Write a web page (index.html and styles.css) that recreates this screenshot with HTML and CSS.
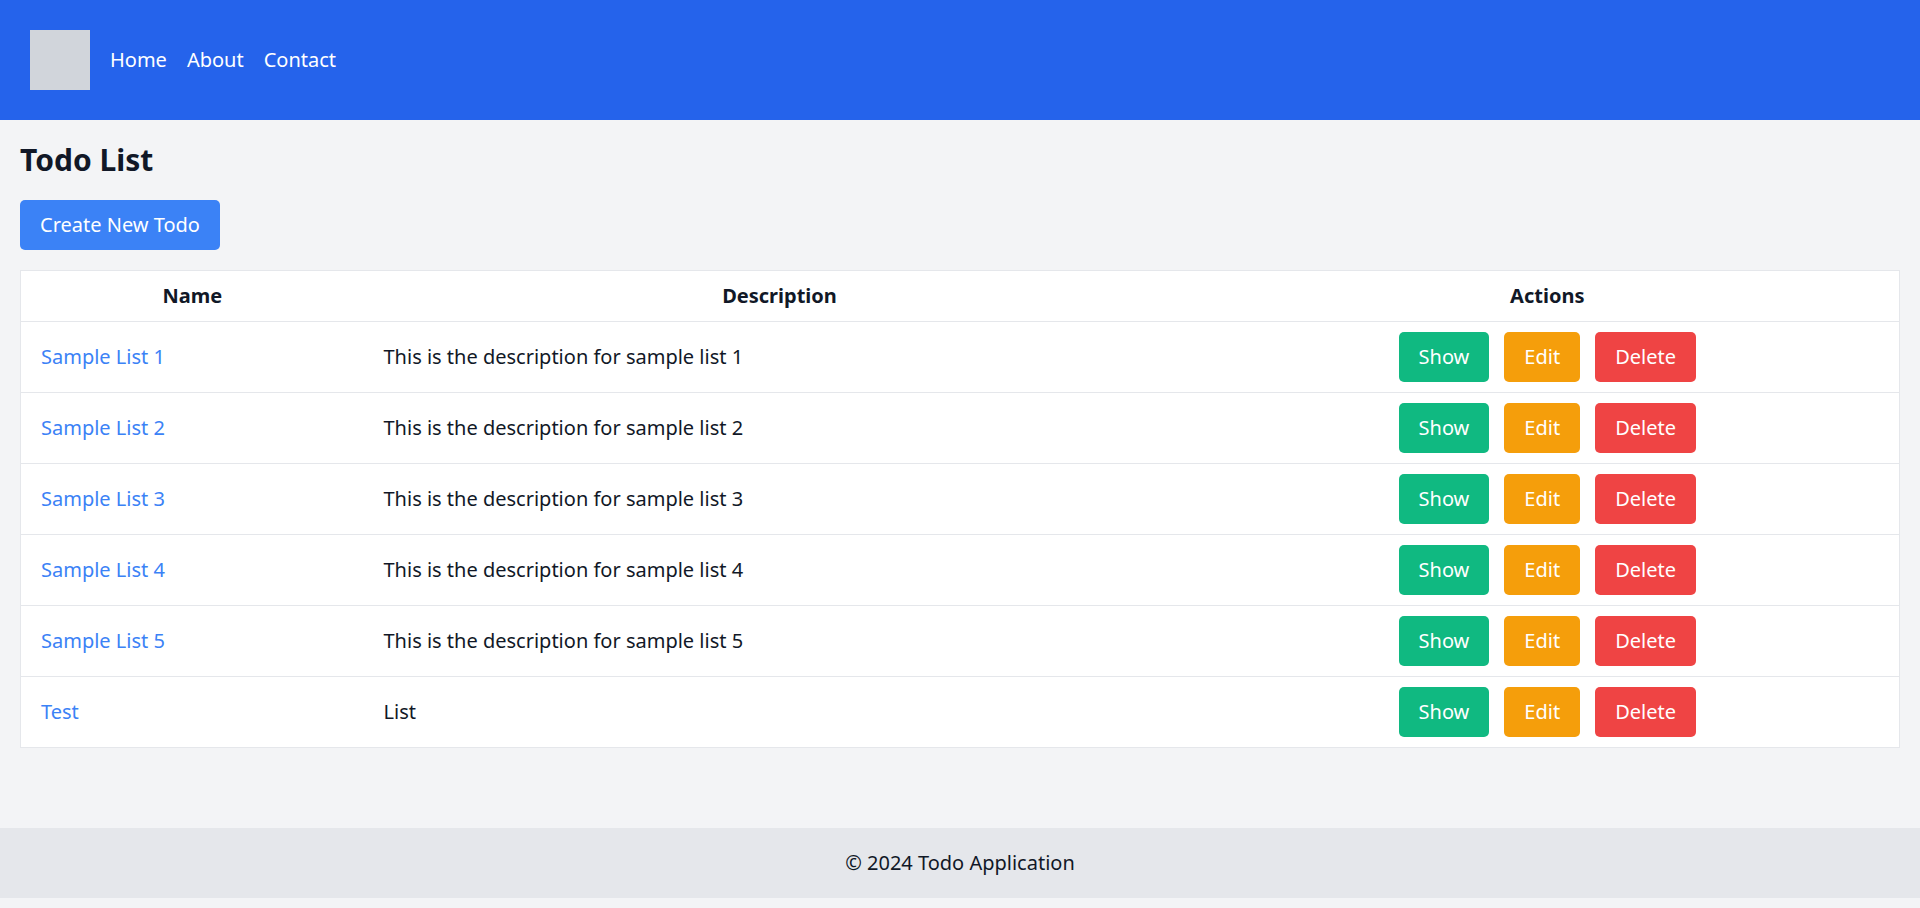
FILE: index.html
```html
<!DOCTYPE html>
<html lang="en">
<head>
<meta charset="utf-8">
<title>Todo List</title>
<link rel="stylesheet" href="styles.css">
</head>
<body>
<header class="topbar">
  <div class="logo"></div>
  <nav class="nav">
    <a href="#">Home</a>
    <a href="#">About</a>
    <a href="#">Contact</a>
  </nav>
</header>
<main class="content">
  <h1 class="title">Todo List</h1>
  <a class="btn btn-create" href="#">Create New Todo</a>
  <table class="todos">
    <colgroup>
      <col class="col-name">
      <col class="col-desc">
      <col class="col-actions">
    </colgroup>
    <thead>
      <tr><th>Name</th><th>Description</th><th>Actions</th></tr>
    </thead>
    <tbody>
      <tr><td><a class="link" href="#">Sample List 1</a></td><td>This is the description for sample list 1</td><td class="actions"><div class="btns"><a class="btn btn-show" href="#">Show</a><a class="btn btn-edit" href="#">Edit</a><a class="btn btn-delete" href="#">Delete</a></div></td></tr>
      <tr><td><a class="link" href="#">Sample List 2</a></td><td>This is the description for sample list 2</td><td class="actions"><div class="btns"><a class="btn btn-show" href="#">Show</a><a class="btn btn-edit" href="#">Edit</a><a class="btn btn-delete" href="#">Delete</a></div></td></tr>
      <tr><td><a class="link" href="#">Sample List 3</a></td><td>This is the description for sample list 3</td><td class="actions"><div class="btns"><a class="btn btn-show" href="#">Show</a><a class="btn btn-edit" href="#">Edit</a><a class="btn btn-delete" href="#">Delete</a></div></td></tr>
      <tr><td><a class="link" href="#">Sample List 4</a></td><td>This is the description for sample list 4</td><td class="actions"><div class="btns"><a class="btn btn-show" href="#">Show</a><a class="btn btn-edit" href="#">Edit</a><a class="btn btn-delete" href="#">Delete</a></div></td></tr>
      <tr><td><a class="link" href="#">Sample List 5</a></td><td>This is the description for sample list 5</td><td class="actions"><div class="btns"><a class="btn btn-show" href="#">Show</a><a class="btn btn-edit" href="#">Edit</a><a class="btn btn-delete" href="#">Delete</a></div></td></tr>
      <tr><td><a class="link" href="#">Test</a></td><td>List</td><td class="actions"><div class="btns"><a class="btn btn-show" href="#">Show</a><a class="btn btn-edit" href="#">Edit</a><a class="btn btn-delete" href="#">Delete</a></div></td></tr>
    </tbody>
  </table>
</main>
<footer class="footer">© 2024 Todo Application</footer>
</body>
</html>
```

FILE: styles.css
```css
* { box-sizing: border-box; }
html, body { margin: 0; padding: 0; }
body {
  font-family: "Noto Sans", "Open Sans", sans-serif;
  font-size: 20px;
  line-height: 30px;
  color: #111827;
  background: #f3f4f6;
}
a { text-decoration: none; }

.topbar {
  background: #2563eb;
  padding: 30px;
  display: flex;
  align-items: center;
}
.logo {
  width: 60px;
  height: 60px;
  background: #d1d5db;
  margin-right: 20px;
}
.nav { display: flex; gap: 20px; }
.nav a { color: #ffffff; }

.content { padding: 20px; }
.title {
  margin: 0 0 20px 0;
  font-size: 30px;
  line-height: 40px;
  font-weight: 700;
}

.btn {
  display: inline-block;
  color: #ffffff;
  padding: 10px 20px;
  border-radius: 5px;
  line-height: 30px;
}
.btn-create { background: #3b82f6; margin-bottom: 20px; }
.btn-show { background: #10b981; }
.btn-edit { background: #f59e0b; }
.btn-delete { background: #ef4444; }

.todos {
  width: 100%;
  border-collapse: collapse;
  background: #ffffff;
  border: 1px solid #e5e7eb;
}
.col-name { width: 343px; }
.col-desc { width: 832px; }
.todos th {
  font-weight: 700;
  padding: 10px 20px;
  text-align: center;
  border-bottom: 1px solid #e5e7eb;
}
.todos td {
  padding: 10px 20px;
  text-align: left;
  border-bottom: 1px solid #e5e7eb;
}
.link { color: #3b82f6; }
.todos td.actions { text-align: center; }
.btns { display: inline-flex; gap: 15px; }

.footer {
  margin-top: 60px;
  background: #e5e7eb;
  padding: 20px;
  text-align: center;
}
```
